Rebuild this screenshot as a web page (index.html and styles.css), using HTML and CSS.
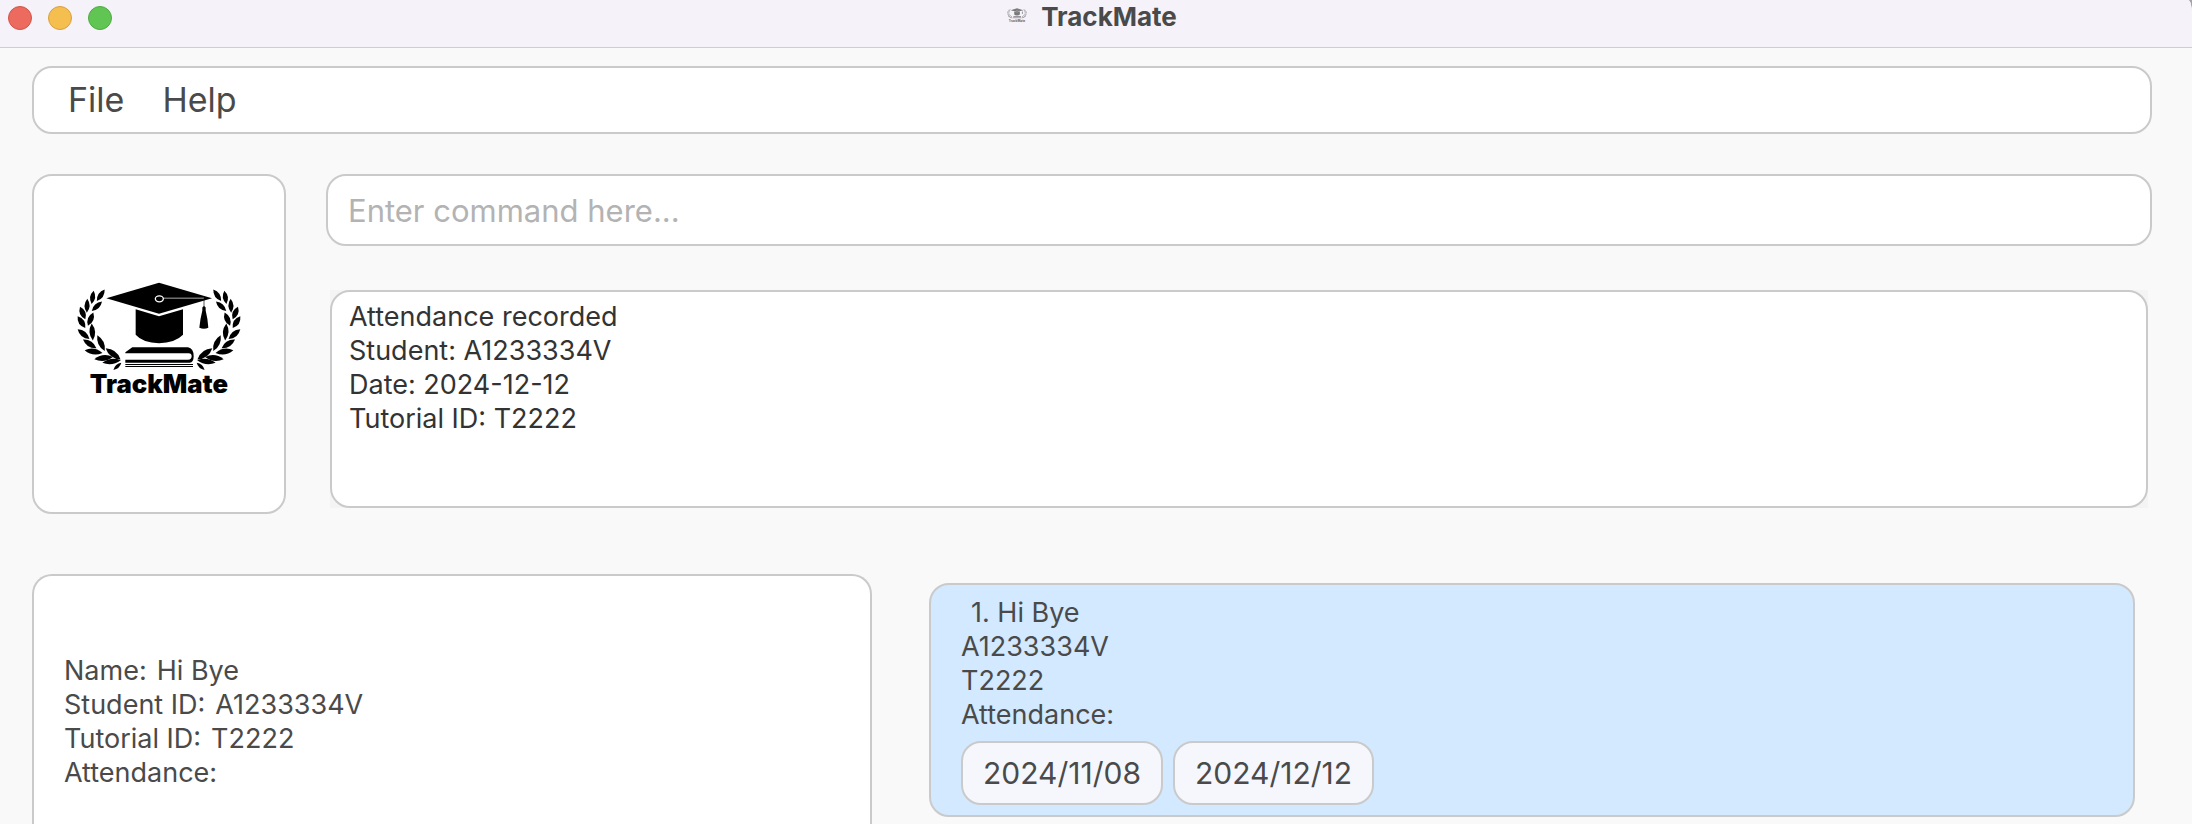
FILE: index.html
```html
<!DOCTYPE html>
<html lang="en">
<head>
<meta charset="utf-8">
<title>TrackMate</title>
<link rel="stylesheet" href="styles.css">
</head>
<body>
<svg class="defs" aria-hidden="true">
  <defs>
    <path id="leaf" d="M0 0Q20 -17 40 0Q20 17 0 0Z"/>
    <g id="laurel">
      <use href="#leaf" transform="translate(134 58) rotate(124) scale(1.05 .9)"/>
      <use href="#leaf" transform="translate(126 94) rotate(137) scale(1.05 .9)"/>
      <use href="#leaf" transform="translate(101 62) rotate(99) scale(1 .9)"/>
      <use href="#leaf" transform="translate(82 86) rotate(92) scale(1.05 .9)"/>
      <use href="#leaf" transform="translate(60 110) rotate(67) scale(1.02 1)"/>
      <use href="#leaf" transform="translate(100 127) rotate(112) scale(1.08 1)"/>
      <use href="#leaf" transform="translate(53 138) rotate(57) scale(1.05 1)"/>
      <use href="#leaf" transform="translate(95 160) rotate(86) scale(1.28 1)"/>
      <use href="#leaf" transform="translate(53 177) rotate(40) scale(1.15 1)"/>
      <use href="#leaf" transform="translate(69 208) rotate(33) scale(1.2 1)"/>
      <use href="#leaf" transform="translate(112 195) rotate(65) scale(1.32 1)"/>
      <use href="#leaf" transform="translate(74 240) rotate(9) scale(1.35 1)"/>
      <use href="#leaf" transform="translate(137 234) rotate(37) scale(1.4 1.1)"/>
      <use href="#leaf" transform="translate(103 267) rotate(-7) scale(1.4 1)"/>
      <use href="#leaf" transform="translate(127 278) rotate(-8) scale(1.4 .9)"/>
      <use href="#leaf" transform="translate(184 278) rotate(138) scale(.8 .6)"/>
    </g>
    <symbol id="logo" viewBox="45 30 504 350">
      <use href="#laurel"/>
      <use href="#laurel" transform="translate(594 0) scale(-1 1)"/>
      <path d="M139 84L297 38L456 84L297 131Z"/>
      <path d="M227 117L297 138L369 117V194Q345 219 297 219Q249 219 227 194Z"/>
      <ellipse cx="298" cy="86" rx="12" ry="9" fill="none" stroke="#fff" stroke-width="4"/>
      <path d="M310 84L432 84" stroke="#fff" stroke-width="2"/>
      <path d="M432 84V112" stroke="#000" stroke-width="2"/>
      <path d="M427 112Q432 104 437 112V121Q443 144 445 173Q432 179 418 173Q421 144 427 121Z"/>
      <path d="M196 246L217 231H384Q401 234 401 258Q401 276 389 278H196V269H384Q395 267 395 258Q395 249 386 249H196Z"/>
      <path d="M196 283H399M196 289H399" stroke="#000" stroke-width="3"/>
      <text class="logo-text" x="297" y="370" text-anchor="middle">TrackMate</text>
    </symbol>
  </defs>
</svg>

<div class="window">
  <header class="titlebar">
    <div class="lights">
      <button class="light close" aria-label="Close"></button>
      <button class="light minimise" aria-label="Minimise"></button>
      <button class="light zoom" aria-label="Zoom"></button>
    </div>
    <div class="window-title">
      <svg class="title-icon" aria-hidden="true"><use href="#logo"/></svg>
      <h1>TrackMate</h1>
    </div>
  </header>

  <main class="content">
    <nav class="menubar box">
      <button>File</button>
      <button>Help</button>
    </nav>

    <section class="top">
      <div class="logo-card box">
        <svg class="logo" role="img" aria-label="TrackMate logo"><use href="#logo"/></svg>
      </div>
      <div class="console">
        <input class="command box" type="text" aria-label="Command" placeholder="Enter command here...">
        <div class="result-wrap">
          <textarea class="result box" aria-label="Result" readonly>Attendance recorded
Student: A1233334V
Date: 2024-12-12
Tutorial ID: T2222</textarea>
        </div>
      </div>
    </section>

    <section class="bottom">
      <dl class="details box">
        <div><dt>Name:</dt><dd>Hi Bye</dd></div>
        <div><dt>Student ID:</dt><dd>A1233334V</dd></div>
        <div><dt>Tutorial ID:</dt><dd>T2222</dd></div>
        <div><dt>Attendance:</dt><dd></dd></div>
      </dl>
      <div class="list">
        <article class="student box">
          <h2>1. Hi Bye</h2>
          <p>A1233334V</p>
          <p>T2222</p>
          <p>Attendance:</p>
          <div class="dates">
            <span class="date">2024/11/08</span>
            <span class="date">2024/12/12</span>
          </div>
        </article>
      </div>
    </section>
  </main>
</div>
</body>
</html>
```
FILE: styles.css
```css
* {
  box-sizing: border-box;
}

html {
  background: #a8a2a8;
}

body {
  margin: 0;
  font-family: Inter, "Liberation Sans", sans-serif;
  font-size: 27px;
  line-height: 34px;
  color: #4a4a4a;
}

button,
input,
textarea {
  font: inherit;
  color: inherit;
}

h1,
h2,
p,
dl,
dd {
  margin: 0;
  font: inherit;
}

.defs {
  position: absolute;
  width: 0;
  height: 0;
}

.window {
  display: flex;
  flex-direction: column;
  height: 100vh;
  overflow: hidden;
  background: #f9f9f9;
  border-top-right-radius: 4px 14px;
}

.titlebar {
  display: grid;
  grid-template-columns: 1fr auto 1fr;
  flex: none;
  height: 48px;
  padding: 0 8px;
  background: #f5f3f9;
  border-bottom: 1px solid #cfcdd0;
}

.lights {
  display: flex;
  gap: 16px;
  padding-top: 6px;
}

.light {
  width: 24px;
  height: 24px;
  padding: 0;
  border: 1px solid;
  border-radius: 50%;
}

.close {
  background: #ec6a5e;
  border-color: #d2544a;
}

.minimise {
  background: #f5bf4f;
  border-color: #d8a040;
}

.zoom {
  background: #61c554;
  border-color: #4fab42;
}

.window-title {
  display: flex;
  gap: 14px;
  margin-right: 8px;
}

.window-title h1 {
  font-size: 26px;
  font-weight: 700;
}

.title-icon {
  width: 20px;
  height: 14px;
  margin-top: 8px;
  opacity: 0.5;
}

.logo-text {
  font-family: Inter, sans-serif;
  font-size: 77px;
  font-weight: 900;
}

.content {
  display: flex;
  flex-direction: column;
  flex: 1;
  min-height: 0;
  padding: 18px 40px 0 32px;
}

.box {
  background: #fff;
  border: 2px solid #cacaca;
  border-radius: 20px;
}

.menubar {
  display: flex;
  flex: none;
  gap: 38px;
  padding: 12px 34px;
}

.menubar button {
  padding: 0;
  border: 0;
  background: none;
  font-size: 34px;
  line-height: 40px;
}

.top {
  display: flex;
  flex: none;
  gap: 40px;
  margin-top: 40px;
}

.logo-card {
  display: grid;
  place-items: center;
  width: 254px;
  height: 340px;
  padding-bottom: 12px;
}

.logo {
  width: 168px;
  height: 117px;
}

.console {
  flex: 1;
}

.command {
  display: block;
  width: 100%;
  height: 72px;
  padding: 0 20px;
  font-size: 31px;
}

.command::placeholder {
  color: #b3b3b3;
  opacity: 1;
}

.result-wrap {
  margin: 44px 4px 0;
  background: #f4f4f4;
}

.result {
  display: block;
  width: 100%;
  height: 218px;
  padding: 8px 17px;
  color: #333;
  resize: none;
}

.bottom {
  display: grid;
  grid-template-columns: 840fr 1223fr;
  flex: 1;
  gap: 57px;
  margin-top: 60px;
}

.details {
  padding: 78px 30px 0;
  border-bottom: 0;
  border-radius: 20px 20px 0 0;
}

.details div {
  display: flex;
  gap: 10px;
}

.list {
  padding: 9px 17px 0 0;
}

.student {
  padding: 11px 30px 10px;
  background: #d2e9ff;
}

.student h2 {
  padding-left: 10px;
}

.dates {
  display: flex;
  gap: 10px;
  margin-top: 9px;
}

.date {
  padding: 12px 20px;
  border: 2px solid #cacaca;
  border-radius: 20px;
  background: #f5f7fc;
  font-size: 30px;
  line-height: 36px;
}
```
